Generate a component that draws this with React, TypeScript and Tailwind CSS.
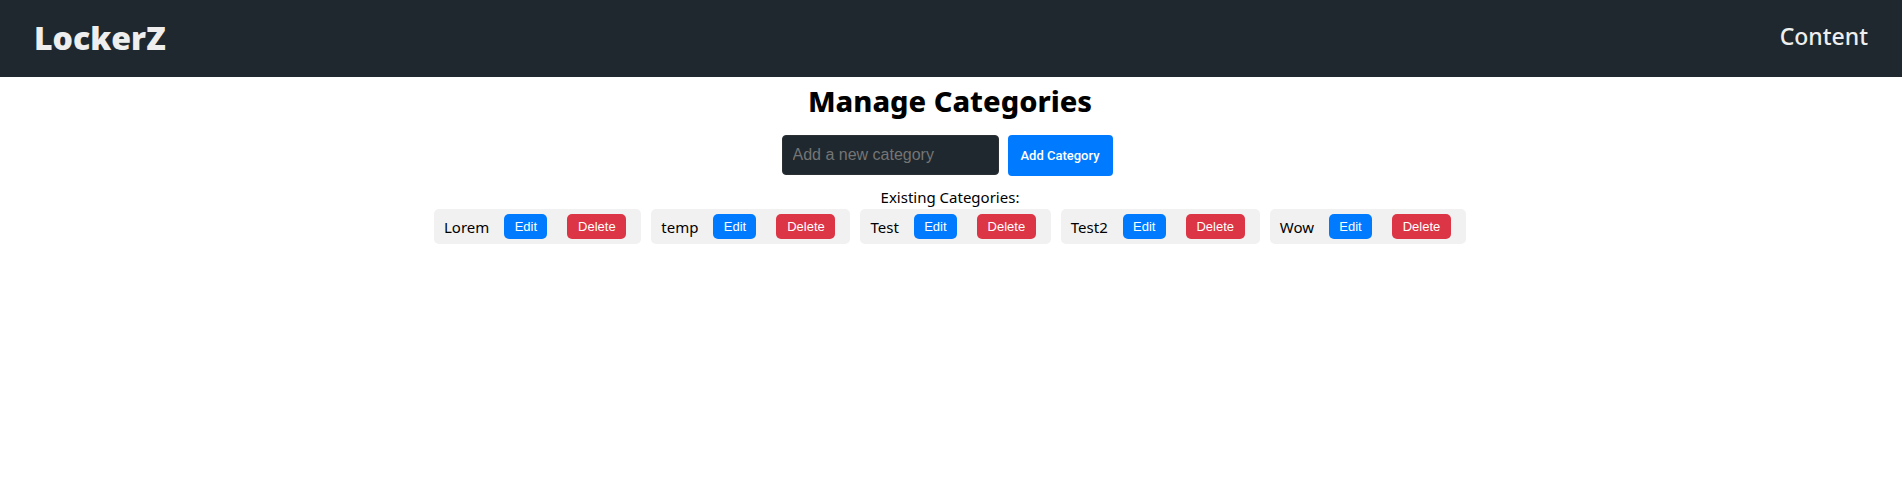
import { useState, type FormEvent } from "react";

const initialCategories = ["Lorem", "temp", "Test", "Test2", "Wow"];

function Header() {
  return (
    <header className="flex h-[77px] items-center justify-between bg-[#1f282e] px-[34px] pb-0.5 text-[#eeeeee]">
      <a href="#home" className="text-[32px] leading-10 font-black">
        LockerZ
      </a>
      <nav>
        <a href="#content" className="text-[23px] font-medium">
          Content
        </a>
      </nav>
    </header>
  );
}

type CategoryProps = { name: string; onEdit: () => void; onDelete: () => void };

function Category({ name, onEdit, onDelete }: CategoryProps) {
  const button =
    "h-[25px] rounded-[5px] font-['Liberation_Sans',sans-serif] text-[13px] leading-4 text-white";
  return (
    <li className="flex items-center rounded-[5px] bg-[#f1f1f1] py-[5px] pr-[15px] pl-2.5">
      <span className="mr-[15px]">{name}</span>
      <button type="button" onClick={onEdit} className={`${button} mr-5 w-[43px] bg-[#007bff]`}>
        Edit
      </button>
      <button type="button" onClick={onDelete} className={`${button} w-[59px] bg-[#dc3545]`}>
        Delete
      </button>
    </li>
  );
}

export default function App() {
  const [categories, setCategories] = useState(initialCategories);
  const [draft, setDraft] = useState("");

  const add = (event: FormEvent) => {
    event.preventDefault();
    const name = draft.trim();
    if (name) {
      setCategories([...categories, name]);
      setDraft("");
    }
  };

  const remove = (name: string) => setCategories(categories.filter((item) => item !== name));

  return (
    <div className="bg-white font-['Noto_Sans',sans-serif] text-[15px] leading-6 text-black">
      <Header />
      <main className="flex flex-col items-center pr-0.5">
        <h1 className="mt-1 text-[29px] leading-10 font-extrabold">Manage Categories</h1>
        <form onSubmit={add} className="mt-3.5 flex items-start gap-[9px] pr-1.5">
          <input
            type="text"
            aria-label="New category"
            placeholder="Add a new category"
            value={draft}
            onChange={(event) => setDraft(event.target.value)}
            className="h-10 w-[217px] rounded-[4px] border border-[#2b3035] bg-[#1f282e] px-2.5 font-['Liberation_Sans',sans-serif] text-base text-[#eeeeee] placeholder:text-[#757575]"
          />
          <button
            type="submit"
            className="h-[41px] w-[105px] rounded-[4px] bg-[#007bff] font-['Roboto',sans-serif] text-[13px] font-medium text-white"
          >
            Add Category
          </button>
        </form>
        <h2 className="mt-[9px]">Existing Categories:</h2>
        <ul className="flex flex-wrap justify-center gap-2.5">
          {categories.map((name) => (
            <Category key={name} name={name} onEdit={() => setDraft(name)} onDelete={() => remove(name)} />
          ))}
        </ul>
      </main>
    </div>
  );
}
